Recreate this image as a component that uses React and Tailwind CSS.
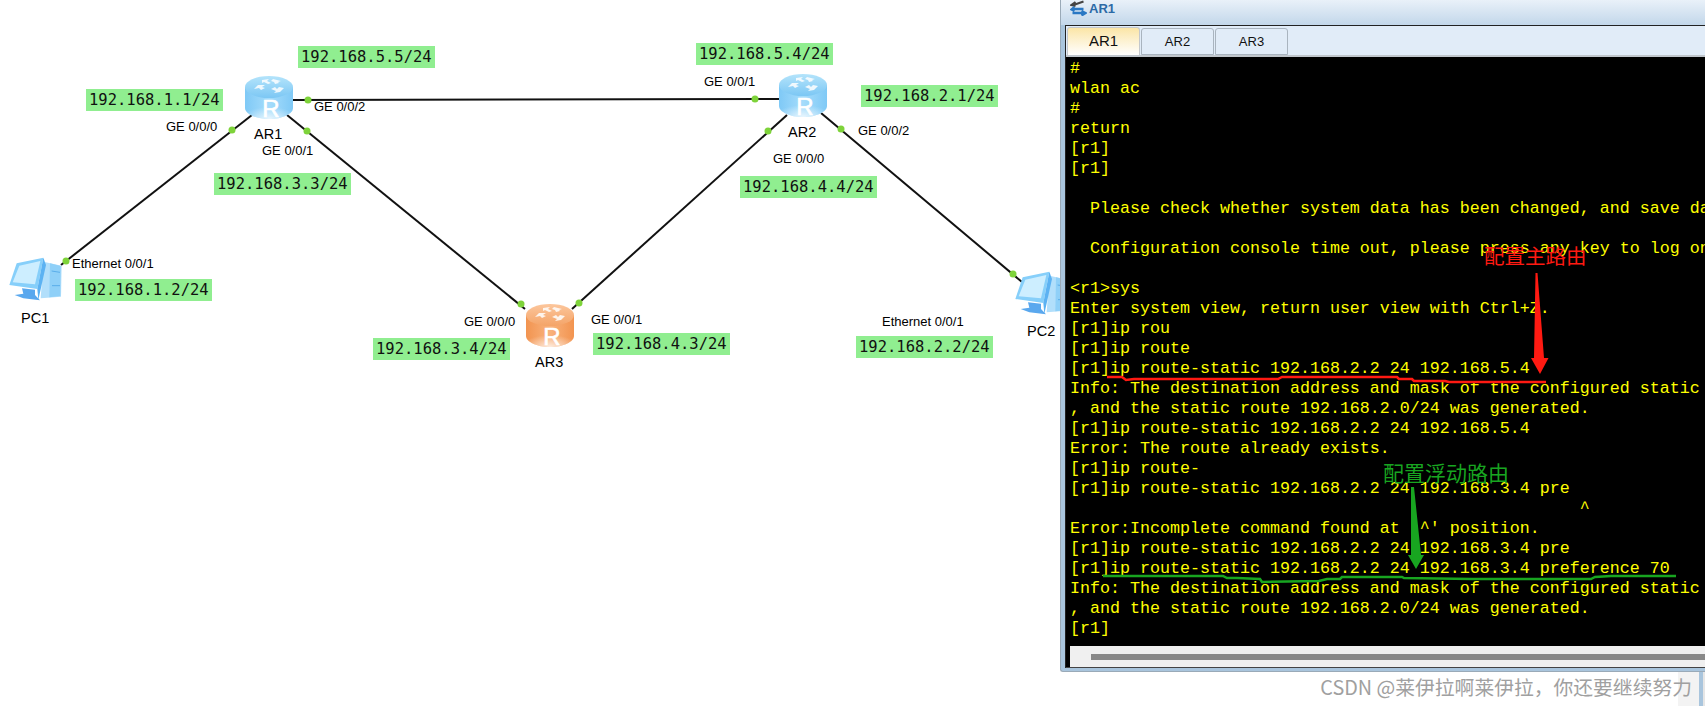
const ipLabels = [
  { text: "192.168.5.5/24", pos: "left-[298px] top-[46px]" },
  { text: "192.168.1.1/24", pos: "left-[86px] top-[89px]" },
  { text: "192.168.3.3/24", pos: "left-[214px] top-[173px]" },
  { text: "192.168.1.2/24", pos: "left-[75px] top-[279px]" },
  { text: "192.168.3.4/24", pos: "left-[373px] top-[338px]" },
  { text: "192.168.5.4/24", pos: "left-[696px] top-[43px]" },
  { text: "192.168.2.1/24", pos: "left-[861px] top-[85px]" },
  { text: "192.168.4.4/24", pos: "left-[740px] top-[176px]" },
  { text: "192.168.4.3/24", pos: "left-[593px] top-[333px]" },
  { text: "192.168.2.2/24", pos: "left-[856px] top-[336px]" },
];

const portLabels = [
  { text: "GE 0/0/0", pos: "left-[166px] top-[119px]" },
  { text: "GE 0/0/2", pos: "left-[314px] top-[99px]" },
  { text: "GE 0/0/1", pos: "left-[262px] top-[143px]" },
  { text: "Ethernet 0/0/1", pos: "left-[72px] top-[256px]" },
  { text: "GE 0/0/1", pos: "left-[704px] top-[74px]" },
  { text: "GE 0/0/2", pos: "left-[858px] top-[123px]" },
  { text: "GE 0/0/0", pos: "left-[773px] top-[151px]" },
  { text: "GE 0/0/0", pos: "left-[464px] top-[314px]" },
  { text: "GE 0/0/1", pos: "left-[591px] top-[312px]" },
  { text: "Ethernet 0/0/1", pos: "left-[882px] top-[314px]" },
];

const nodeNames = [
  { text: "AR1", pos: "left-[254px] top-[126px]" },
  { text: "AR2", pos: "left-[788px] top-[124px]" },
  { text: "AR3", pos: "left-[535px] top-[354px]" },
  { text: "PC1", pos: "left-[21px] top-[310px]" },
  { text: "PC2", pos: "left-[1027px] top-[323px]" },
];

const links = [
  [293, 100, 779, 99],
  [252, 115, 61, 265],
  [287, 115, 525, 309],
  [787, 115, 572, 309],
  [821, 113, 1022, 282],
];

const ports = [
  [308, 100], [232, 130], [307, 131], [66, 261], [755, 99],
  [768, 131], [841, 129], [1013, 274], [521, 304], [579, 303],
];

const consoleLines = [
  "#",
  "wlan ac",
  "#",
  "return",
  "[r1]",
  "[r1]",
  "",
  "  Please check whether system data has been changed, and save data",
  "",
  "  Configuration console time out, please press any key to log on",
  "",
  "<r1>sys",
  "Enter system view, return user view with Ctrl+Z.",
  "[r1]ip rou",
  "[r1]ip route",
  "[r1]ip route-static 192.168.2.2 24 192.168.5.4",
  "Info: The destination address and mask of the configured static route",
  ", and the static route 192.168.2.0/24 was generated.",
  "[r1]ip route-static 192.168.2.2 24 192.168.5.4",
  "Error: The route already exists.",
  "[r1]ip route-",
  "[r1]ip route-static 192.168.2.2 24 192.168.3.4 pre",
  "                                                   ^",
  "Error:Incomplete command found at '^' position.",
  "[r1]ip route-static 192.168.2.2 24 192.168.3.4 pre",
  "[r1]ip route-static 192.168.2.2 24 192.168.3.4 preference 70",
  "Info: The destination address and mask of the configured static route",
  ", and the static route 192.168.2.0/24 was generated.",
  "[r1]",
];

function Router({ id, pos, side, mid, top, topEdge }) {
  return (
    <svg className={`absolute ${pos} overflow-visible`} width="48" height="43" viewBox="0 0 48 43">
      <defs>
        <linearGradient id={`${id}-body`} x1="0" x2="1" y1="0" y2="0">
          <stop offset="0" stopColor={side} />
          <stop offset="0.5" stopColor={mid} />
          <stop offset="1" stopColor={side} />
        </linearGradient>
        <linearGradient id={`${id}-top`} x1="0" x2="0" y1="0" y2="1">
          <stop offset="0" stopColor={top} />
          <stop offset="1" stopColor={topEdge} />
        </linearGradient>
        <radialGradient id={`${id}-glow`} cx="0.5" cy="1" r="0.6">
          <stop offset="0" stopColor="#ffffff" stopOpacity="0.75" />
          <stop offset="1" stopColor="#ffffff" stopOpacity="0" />
        </radialGradient>
      </defs>
      <path d="M0 11 V32 C0 38 11 43 24 43 C37 43 48 38 48 32 V11 Z" fill={`url(#${id}-body)`} />
      <path d="M0 23 V32 C0 38 11 43 24 43 C37 43 48 38 48 32 V23 Z" fill={`url(#${id}-glow)`} />
      <ellipse cx="24" cy="11" rx="24" ry="11" fill={`url(#${id}-top)`} />
      <g fill="#ffffff" opacity="0.85">
        <path d="M17 4 L24 3 L22 5 L26 7 L23 8 L19 6 L17 7 Z" />
        <path d="M28 3 L36 5 L33 6 L34 7 L30 8 L29 6 L26 5 Z" />
        <path d="M9 13 L13 9 L20 9 L17 11 L20 12 L16 14 L14 12 Z" />
        <path d="M26 13 L30 11 L32 13 L34 11 L39 12 L35 16 L29 17 L31 15 Z" />
      </g>
      <text
        x="26"
        y="41"
        textAnchor="middle"
        fill="#ffffff"
        stroke="#ffffff"
        strokeWidth="0.6"
        fontSize="24"
        fontFamily="'Liberation Sans', sans-serif"
      >
        R
      </text>
    </svg>
  );
}

function Computer({ pos }) {
  return (
    <svg className={`absolute ${pos}`} width="80" height="80" viewBox="0 0 240 240">
      <path d="M130 50 L185 62 L183 155 L122 160 Z" fill="#b2dffb" />
      <path d="M150 55 L182 63 L181 153 L148 157 Z" fill="#8fd0f8" />
      <path d="M155 78 L180 82 M156 122 L180 122" stroke="#5aaeea" strokeWidth="3" />
      <path d="M130 38 L50 55 L28 120 L112 132 Z" fill="#86cffa" />
      <path d="M130 38 L138 60 L115 165 L112 132 Z" fill="#5cb2f2" />
      <path d="M58 62 L121 48 L105 118 L38 112 Z" fill="#cdeeff" />
      <path d="M66 130 L105 134 L105 150 L120 166 L70 160 L44 150 L70 146 Z" fill="#5aa8ee" />
    </svg>
  );
}

export default function App() {
  return (
    <div className="relative flex h-[706px] w-[1705px] overflow-hidden bg-white">
      <div className="relative w-[1060px] shrink-0 overflow-hidden">
        <svg className="absolute inset-0" width="1060" height="706">
          {links.map(([x1, y1, x2, y2]) => (
            <line key={`${x1}-${y1}`} x1={x1} y1={y1} x2={x2} y2={y2} stroke="#111111" strokeWidth="2" />
          ))}
          {ports.map(([cx, cy]) => (
            <circle key={`${cx}-${cy}`} cx={cx} cy={cy} r="3.5" fill="#7ed33a" />
          ))}
        </svg>

        <Router id="ar1" pos="left-[245px] top-[76px]" side="#7fc9f6" mid="#a5dcfb" top="#b4e4fb" topEdge="#7cc7f4" />
        <Router id="ar2" pos="left-[779px] top-[74px]" side="#7fc9f6" mid="#a5dcfb" top="#b4e4fb" topEdge="#7cc7f4" />
        <Router id="ar3" pos="left-[526px] top-[304px]" side="#f29450" mid="#f9b27c" top="#fcc69c" topEdge="#f4a468" />
        <Computer pos="left-0 top-[245px]" />
        <Computer pos="left-[1006px] top-[259px]" />

        {ipLabels.map((l) => (
          <div
            key={l.text}
            className={`absolute ${l.pos} h-[22px] bg-[#90ee90] px-[3px] font-['DejaVu_Sans_Mono',monospace] text-[15.5px] leading-[22px] whitespace-nowrap text-[#111111]`}
          >
            {l.text}
          </div>
        ))}
        {portLabels.map((l) => (
          <div
            key={l.pos}
            className={`absolute ${l.pos} font-['Liberation_Sans',sans-serif] text-[13px] leading-[16px] whitespace-nowrap text-black`}
          >
            {l.text}
          </div>
        ))}
        {nodeNames.map((l) => (
          <div
            key={l.text}
            className={`absolute ${l.pos} font-['Liberation_Sans',sans-serif] text-[14.5px] leading-[16px] whitespace-nowrap text-black`}
          >
            {l.text}
          </div>
        ))}
      </div>

      <div className="flex min-w-0 flex-1 flex-col">
        <div className="flex h-[672px] flex-col rounded-bl-[3px] border-b border-l border-[#9aaab8] bg-[#a9c5dd]">
          <div className="flex h-[25px] shrink-0 items-start gap-[2px] bg-gradient-to-b from-[#e9f1f9] to-[#c3d7ea] pl-[9px]">
            <svg width="17" height="16" viewBox="0 0 16 16">
              <path d="M3 5 L13 1.5 M5 2 L1 5 L5 6" fill="none" stroke="#444444" strokeWidth="2" />
              <path d="M2 9 H13 M2 13 H13 M4 7 L1 9.5 L4 11 M11 11 L15 13 L11 15.5" fill="none" stroke="#2a78c4" strokeWidth="2.4" />
            </svg>
            <span className="pt-px font-['Liberation_Sans',sans-serif] text-[13px] leading-[16px] font-bold text-[#2c6aa6]">AR1</span>
          </div>

          <div className="flex min-h-0 flex-1 flex-col pl-[4px]">
            <div className="flex min-h-0 flex-1 flex-col overflow-hidden border-t border-l border-[#222222]">
              <div className="flex h-[29px] shrink-0 items-end gap-px bg-[#e1ecf8] pl-px">
                <div className="flex h-[28px] w-[73px] items-center justify-center rounded-t-[3px] border border-b-0 border-[#c4c8cc] bg-gradient-to-b from-[#fbe5a6] to-[#ffffff] font-['Liberation_Sans',sans-serif] text-[15px] text-[#111111]">
                  AR1
                </div>
                {["AR2", "AR3"].map((tab) => (
                  <div
                    key={tab}
                    className="flex h-[27px] w-[73px] items-center justify-center rounded-t-[3px] border border-[#a9b4bf] bg-[#e1ecf8] font-['Liberation_Sans',sans-serif] text-[13px] text-[#111111]"
                  >
                    {tab}
                  </div>
                ))}
              </div>
              <div className="h-[2px] shrink-0 bg-[#c0c6cc]" />
              <div className="h-[589px] shrink-0 overflow-hidden bg-black pt-[2px] pl-[4px] font-['Liberation_Mono',monospace] text-[16.67px] leading-[20px] text-[#ffff00]">
                {consoleLines.map((line, i) => (
                  <div key={i} className="h-[20px] whitespace-pre">
                    {line}
                  </div>
                ))}
              </div>
              <div className="h-[21px] shrink-0 border-l-[4px] border-black bg-[#f0f0f0] pt-[8px] pl-[21px]">
                <div className="h-[6px] bg-[#888888]" />
              </div>
              <div className="h-px shrink-0 bg-[#444444]" />
            </div>
          </div>
          <div className="h-[3px] shrink-0" />
        </div>

        <div className="flex flex-1">
          <div className="flex-1 bg-white" />
          <div className="w-[21px] bg-[#f3f3f3]" />
          <div className="w-[4px] bg-[#a9c5dd]" />
          <div className="w-[2px] bg-[#e6e6e6]" />
        </div>
      </div>

      {/* hand drawn notes on top of the console */}
      <svg className="absolute inset-0" width="1705" height="706">
        <polyline
          points="1107,377 1122,377 1126,380 1134,379 1278,379 1282,377 1397,377 1399,379 1412,379 1414,381 1445,381 1449,382 1546,382"
          fill="none"
          stroke="#ff1a12"
          strokeWidth="2.5"
        />
        <path d="M1535.5 273 L1537.5 273 L1544 358 L1548.5 358 L1540 374 L1531 358 L1534 358 Z" fill="#ff1a12" />
        <polyline
          points="1103,576 1223,576 1227,578 1237,578 1260,579 1262,582 1319,581 1327,579 1340,579 1342,577 1402,577 1404,578 1472,579 1591,579 1595,577 1611,576 1676,576"
          fill="none"
          stroke="#18a520"
          strokeWidth="2.5"
        />
        <path d="M1411 487 L1414 487 L1421 555 L1424 555 L1416 569 L1408 555 L1411 555 Z" fill="#18a520" />
      </svg>
      <div className="absolute top-[243px] left-[1484px] font-['Noto_Sans_CJK_SC',sans-serif] text-[20.5px] leading-[24px] text-[#ff1a12]">
        配置主路由
      </div>
      <div className="absolute top-[460px] left-[1383px] font-['Noto_Sans_CJK_SC',sans-serif] text-[21px] leading-[24px] text-[#18a520]">
        配置浮动路由
      </div>
      <div className="absolute top-[675px] right-[13px] font-['Noto_Sans_CJK_SC',sans-serif] text-[19.8px] leading-[24px] whitespace-nowrap text-[#a0a0a0]">
        CSDN @莱伊拉啊莱伊拉，你还要继续努力
      </div>
    </div>
  );
}
